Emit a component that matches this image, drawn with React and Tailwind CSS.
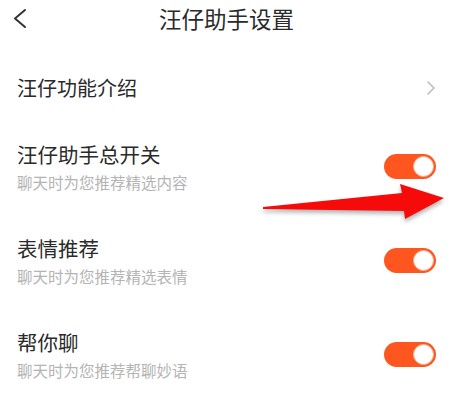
import React from "react";

const items = [
  { title: "汪仔助手总开关", desc: "聊天时为您推荐精选内容" },
  { title: "表情推荐", desc: "聊天时为您推荐精选表情" },
  { title: "帮你聊", desc: "聊天时为您推荐帮聊妙语" },
];

function Toggle() {
  return (
    <div className="w-[52px] h-[25px] rounded-full bg-[#ff561f] flex items-center justify-end pr-[2px] mb-[4px]">
      <div className="w-[21px] h-[21px] rounded-full bg-white border border-[#f7b08f]" />
    </div>
  );
}

export default function App() {
  return (
    <div
      className="relative w-[451px] h-[401px] bg-white overflow-hidden text-[#2a2a2a]"
      style={{ fontFamily: '"Noto Sans CJK SC", "Noto Sans", sans-serif' }}
    >
      {/* Header */}
      <div className="relative h-[36px] flex items-center justify-center">
        <svg className="absolute left-[10px] top-[7px]" width="20" height="24" viewBox="0 0 20 24">
          <path d="M15 3 L5 11.5 L15 20" fill="none" stroke="#333" strokeWidth="2" strokeLinecap="round" strokeLinejoin="round" />
        </svg>
        <span className="text-[22.5px] leading-none ml-[2px]">汪仔助手设置</span>
      </div>

      <div className="pt-[19px]">
        {/* Intro row */}
        <div className="h-[66px] flex items-center justify-between pl-[17px] pr-[15px]">
          <span className="text-[20px] leading-[28px]">汪仔功能介绍</span>
          <svg width="10" height="16" viewBox="0 0 10 16">
            <path d="M2 2 L8 8 L2 14" fill="none" stroke="#bbb" strokeWidth="1.5" strokeLinecap="round" strokeLinejoin="round" />
          </svg>
        </div>

        {items.map((it) => (
          <div key={it.title} className="h-[94px] flex items-center justify-between pl-[17px] pr-[15px]">
            <div className="flex flex-col gap-[4px] mb-[4px]">
              <span className="text-[20.5px] leading-[28px]">{it.title}</span>
              <span className="text-[15.5px] leading-[20px] text-[#b4b4b4]">{it.desc}</span>
            </div>
            <Toggle />
          </div>
        ))}
      </div>

      {/* Annotation arrow */}
      <svg
        className="absolute left-0 top-0 pointer-events-none drop-shadow-[0_3px_2px_rgba(0,0,0,0.3)]"
        width="451"
        height="401"
        viewBox="0 0 451 401"
      >
        <polygon points="263,207 402,193 400,184 444,198 405,219 404,211 263,209" fill="#f70a0a" />
      </svg>
    </div>
  );
}
